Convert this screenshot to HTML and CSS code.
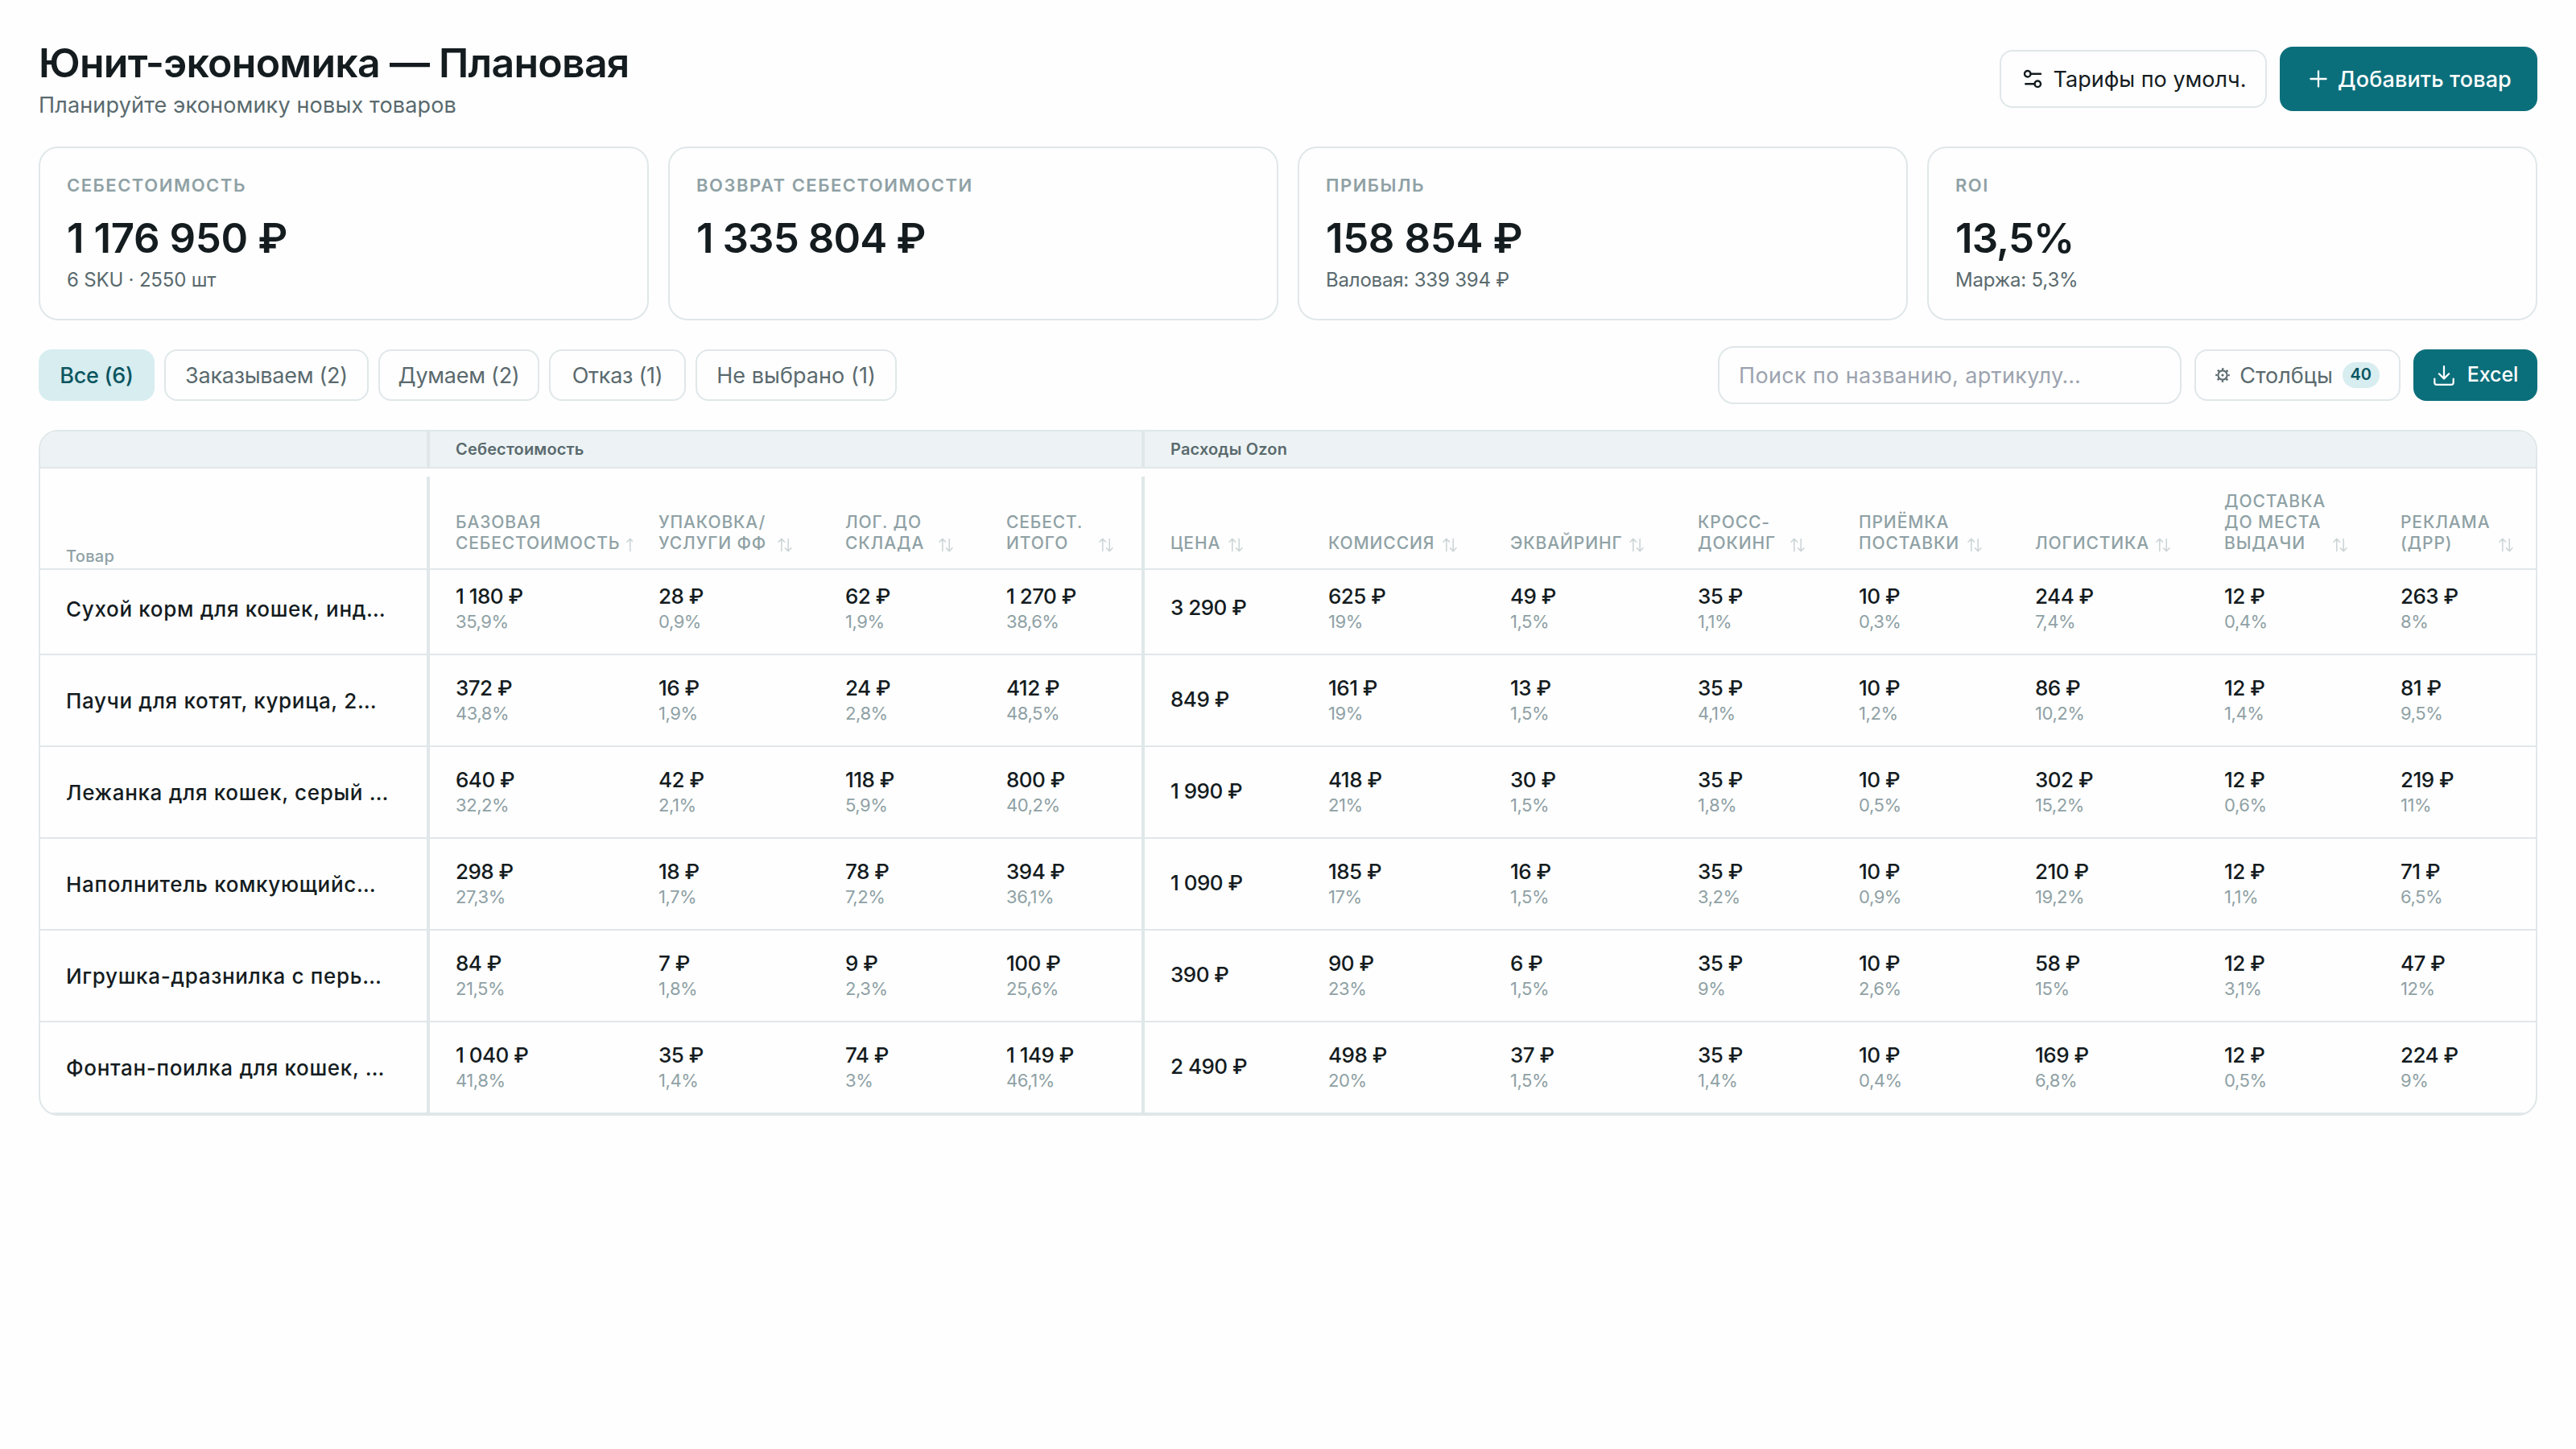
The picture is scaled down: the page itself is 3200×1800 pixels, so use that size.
FILE: index.html
```
<!DOCTYPE html>
<html lang="ru">
<head>
    <meta charset="UTF-8">
    <meta name="viewport" content="width=device-width, initial-scale=1.0">
    <title>Юнит-экономика — Плановая</title>
    <link rel="stylesheet" href="styles.css">
</head>
<body>
    <div class="page">
        <header class="header">
            <div>
                <h1>Юнит-экономика — Плановая</h1>
                <p>Планируйте экономику новых товаров</p>
            </div>
            <div class="header-actions">
                <button class="btn btn-tariffs">
                    <svg width="30" height="30" viewBox="0 0 24 24" fill="none" stroke="currentColor" stroke-width="1.9" stroke-linecap="round"><circle cx="7" cy="7" r="3"/><path d="M10 7h10"/><circle cx="17" cy="17" r="3"/><path d="M14 17H5"/></svg>
                    Тарифы по умолч.
                </button>
                <button class="btn btn-primary btn-add">
                    <svg width="32" height="32" viewBox="0 0 24 24" fill="none" stroke="currentColor" stroke-width="1.7" stroke-linecap="round"><path d="M12 4.8v14.4M4.8 12h14.4"/></svg>
                    Добавить товар
                </button>
            </div>
        </header>

        <section class="cards">
            <div class="card">
                <div class="card-label">Себестоимость</div>
                <div class="card-value">1 176 950 ₽</div>
                <div class="card-sub">6 SKU · 2550 шт</div>
            </div>
            <div class="card">
                <div class="card-label">Возврат себестоимости</div>
                <div class="card-value wide">1 335 804 ₽</div>
            </div>
            <div class="card">
                <div class="card-label">Прибыль</div>
                <div class="card-value">158 854 ₽</div>
                <div class="card-sub">Валовая: 339 394 ₽</div>
            </div>
            <div class="card">
                <div class="card-label">ROI</div>
                <div class="card-value wide">13,5%</div>
                <div class="card-sub">Маржа: 5,3%</div>
            </div>
        </section>

        <div class="toolbar">
            <div class="chips">
                <button class="chip active">Все (6)</button>
                <button class="chip">Заказываем (2)</button>
                <button class="chip">Думаем (2)</button>
                <button class="chip">Отказ (1)</button>
                <button class="chip">Не выбрано (1)</button>
            </div>
            <div class="tools">
                <input class="search" type="text" placeholder="Поиск по названию, артикулу…">
                <button class="btn btn-columns">
                    <svg width="18" height="18" viewBox="0 0 18 18" fill="none" stroke="currentColor"><circle cx="9" cy="9" r="5.6" stroke-width="2.1"/><circle cx="9" cy="9" r="7.6" stroke-width="2.4" stroke-dasharray="2.39 3.58" stroke-dashoffset="1.2"/><circle cx="9" cy="9" r="1.6" fill="currentColor" stroke="none"/></svg>
                    <span>Столбцы</span>
                    <span class="badge">40</span>
                </button>
                <button class="btn btn-primary btn-excel">
                    <svg width="26" height="26" viewBox="0 0 26 26" fill="none" stroke="currentColor" stroke-width="2.2" stroke-linecap="round" stroke-linejoin="round"><path d="M13 2v15M6.8 11.3L13 17.4l6.2-6.1M1.3 17.5v4.7a2.6 2.6 0 0 0 2.6 2.6h18.2a2.6 2.6 0 0 0 2.6-2.6v-4.7"/></svg>
                    <span>Excel</span>
                </button>
            </div>
        </div>

        <div class="table-wrap">
            <table>
                <colgroup id="cols"></colgroup>
                <thead>
                    <tr class="groups">
                        <th></th>
                        <th class="sep" colspan="4">Себестоимость</th>
                        <th class="sep" colspan="8">Расходы Ozon</th>
                    </tr>
                    <tr class="gap">
                        <th colspan="13"></th>
                    </tr>
                    <tr class="heads" id="heads"></tr>
                </thead>
                <tbody id="rows"></tbody>
            </table>
        </div>
    </div>

    <script>
        // title, column width, label width
        const columns = [
            ['Товар', 480, 0],
            ['Базовая<br>себестоимость', 256, 205],
            ['Упаковка/<br>услуги ФФ', 232, 141],
            ['Лог. до<br>склада', 200, 109],
            ['Себест.<br>итого', 200, 108],
            ['Цена', 200, 65],
            ['Комиссия', 226, 135],
            ['Эквайринг', 233, 141],
            ['Кросс-<br>докинг', 200, 108],
            ['Приёмка<br>поставки', 219, 128],
            ['Логистика', 235, 143],
            ['Доставка<br>до места<br>выдачи', 219, 128],
            ['Реклама<br>(ДРР)', 200, 115]
        ];

        const products = [
            ['Сухой корм для кошек, инд…', '1 180|35,9', '28|0,9', '62|1,9', '1 270|38,6', '3 290', '625|19', '49|1,5', '35|1,1', '10|0,3', '244|7,4', '12|0,4', '263|8'],
            ['Паучи для котят, курица, 2…', '372|43,8', '16|1,9', '24|2,8', '412|48,5', '849', '161|19', '13|1,5', '35|4,1', '10|1,2', '86|10,2', '12|1,4', '81|9,5'],
            ['Лежанка для кошек, серый …', '640|32,2', '42|2,1', '118|5,9', '800|40,2', '1 990', '418|21', '30|1,5', '35|1,8', '10|0,5', '302|15,2', '12|0,6', '219|11'],
            ['Наполнитель комкующийс…', '298|27,3', '18|1,7', '78|7,2', '394|36,1', '1 090', '185|17', '16|1,5', '35|3,2', '10|0,9', '210|19,2', '12|1,1', '71|6,5'],
            ['Игрушка-дразнилка с перь…', '84|21,5', '7|1,8', '9|2,3', '100|25,6', '390', '90|23', '6|1,5', '35|9', '10|2,6', '58|15', '12|3,1', '47|12'],
            ['Фонтан-поилка для кошек, …', '1 040|41,8', '35|1,4', '74|3', '1 149|46,1', '2 490', '498|20', '37|1,5', '35|1,4', '10|0,4', '169|6,8', '12|0,5', '224|9']
        ];

        const sortIcon = '<svg class="sort" width="18" height="18" viewBox="0 0 18 18" fill="none" stroke="currentColor" stroke-width="1.6" stroke-linecap="round" stroke-linejoin="round"><path d="M4.8 16.5V1.5M1 5.2l3.8-3.8 3.8 3.8M13.2 1.5v15M9.4 12.8l3.8 3.8 3.8-3.8"/></svg>';
        const sep = i => i === 1 || i === 5 ? ' class="sep"' : '';

        document.getElementById('cols').innerHTML = columns.map(c => `<col style="width:${c[1]}px">`).join('');

        document.getElementById('heads').innerHTML = columns.map((c, i) => i === 0
            ? `<th class="name-head">${c[0]}</th>`
            : `<th${sep(i)}><div class="head"><span style="width:${c[2]}px">${c[0]}</span>${sortIcon}</div></th>`).join('');

        document.getElementById('rows').innerHTML = products.map(p => '<tr>' + p.map((cell, i) => {
            if (i === 0) return `<td class="name">${cell}</td>`;
            const [value, share] = cell.split('|');
            return `<td${sep(i)}><div class="value">${value} ₽</div>${share ? `<div class="share">${share}%</div>` : ''}</td>`;
        }).join('') + '</tr>').join('');
    </script>
</body>
</html>
```
FILE: styles.css
```
* { margin: 0; padding: 0; box-sizing: border-box; }
body { font-family: Inter, "Liberation Sans", sans-serif; background: #fefefe; color: #141c1f; }
button, input { font-family: inherit; }
svg { flex-shrink: 0; }
.page { padding: 48px 48px 0; }

.header { display: flex; justify-content: space-between; align-items: center; height: 100px; margin-bottom: 34px; }
.header h1 { font-size: 50px; line-height: 60px; font-weight: 570; letter-spacing: -0.015em; }
.header p { margin-top: 5px; font-size: 27px; line-height: 36px; letter-spacing: 0.006em; color: #5a6a6e; }
.header-actions { display: flex; align-items: center; gap: 16px; }

.btn { display: flex; align-items: center; justify-content: center; border: 2px solid #e0e7e9; border-radius: 16px; background: #fefefe; color: #141c1f; font-size: 27px; font-weight: 400; white-space: nowrap; }
.btn-tariffs { width: 332px; height: 72px; gap: 11px; letter-spacing: 0; }
.btn-primary { background: #0b6f7b; border: none; color: #fff; font-weight: 480; }
.btn-add { width: 320px; height: 80px; gap: 8px; letter-spacing: 0.005em; }

.cards { display: grid; grid-template-columns: repeat(4, 1fr); gap: 24px; }
.card { height: 216px; padding: 32px 33px; border: 2px solid #e0e7e9; border-radius: 24px; background: #fefefe; }
.card-label { font-size: 22px; line-height: 28px; font-weight: 600; letter-spacing: 0.069em; text-transform: uppercase; color: #8fa1a5; }
.card-value { margin-top: 22px; font-size: 51px; line-height: 60px; font-weight: 570; letter-spacing: -0.008em; }
.card-value.wide { letter-spacing: -0.018em; }
.card-sub { margin-top: 6px; font-size: 24px; line-height: 32px; letter-spacing: -0.008em; color: #5a6a6e; }

.toolbar { display: flex; justify-content: space-between; align-items: center; height: 72px; margin: 32px 0; }
.chips { display: flex; gap: 12px; }
.chip { height: 64px; border: 2px solid #e0e7e9; border-radius: 16px; background: #fefefe; color: #5a6a6e; font-size: 27px; letter-spacing: -0.01em; white-space: nowrap; }
.chip.active { background: #d8edf0; border-color: #d8edf0; color: #0b5560; font-weight: 550; }
.chip:nth-child(1) { width: 144px; }
.chip:nth-child(2) { width: 254px; }
.chip:nth-child(3) { width: 200px; }
.chip:nth-child(4) { width: 170px; }
.chip:nth-child(5) { width: 250px; letter-spacing: 0.002em; }

.tools { display: flex; align-items: center; gap: 16px; }
.search { width: 576px; height: 72px; padding: 0 24px; border: 2px solid #e0e7e9; border-radius: 20px; background: #fefefe; font-size: 27px; letter-spacing: 0.013em; }
.search::placeholder { color: #9ca3af; opacity: 1; }
.btn-columns { width: 256px; height: 64px; gap: 12px; color: #5a6a6e; }
.badge { width: 46px; height: 32px; border-radius: 16px; background: #d8edf0; color: #0b5560; font-size: 20px; line-height: 30px; font-weight: 600; text-align: center; }
.btn-excel { width: 154px; height: 64px; gap: 16px; padding-left: 1px; font-size: 25px; letter-spacing: -0.005em; }
.btn-excel span { padding-bottom: 3px; }

.table-wrap { border: 2px solid #e0e7e9; border-radius: 24px; overflow: hidden; background: #fefefe; }
table { width: 3100px; table-layout: fixed; border-collapse: separate; border-spacing: 0; }
th, td { padding: 0 0 0 32px; border-bottom: 2px solid #e0e7e9; text-align: left; white-space: nowrap; overflow: hidden; }
.sep { border-left: 4px solid #e0e7e9; }
.groups th { height: 46px; background: #edf3f4; color: #5a6a6e; font-size: 20px; line-height: 24px; font-weight: 600; letter-spacing: 0.008em; }
.gap th { height: 10px; border: none; }
.heads th { height: 116px; padding-bottom: 18px; vertical-align: bottom; font-size: 21px; line-height: 26px; font-weight: 500; letter-spacing: 0.042em; text-transform: uppercase; color: #8fa1a5; }
.heads .name-head { padding-bottom: 3px; font-size: 20px; line-height: 24px; letter-spacing: 0.015em; text-transform: none; }
.head { display: flex; align-items: flex-end; gap: 7px; }
.head span { flex-shrink: 0; }
.sort { margin-bottom: 2px; color: #cdd5d7; }

td { height: 114px; padding-bottom: 4px; vertical-align: middle; }
tbody tr:first-child td { height: 106px; padding-bottom: 12px; }
td.name { padding-bottom: 0; padding-top: 1px; font-size: 26px; line-height: 32px; font-weight: 460; letter-spacing: 0.026em; }
tbody tr:first-child td.name { padding-bottom: 7px; }
.value { font-size: 26px; line-height: 35px; font-weight: 450; letter-spacing: -0.02em; }
.share { font-size: 22px; line-height: 28px; letter-spacing: -0.02em; color: #8fa1a5; }
```
